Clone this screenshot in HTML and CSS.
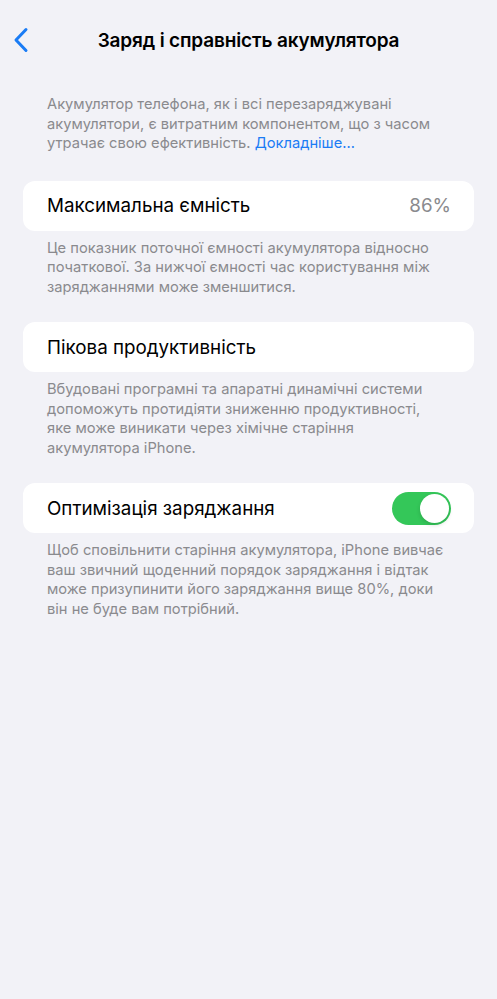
FILE: index.html
```html
<!DOCTYPE html>
<html lang="uk">
<head>
    <meta charset="UTF-8">
    <meta name="viewport" content="width=device-width, initial-scale=1.0">
    <title>Заряд і справність акумулятора</title>
    <link rel="stylesheet" href="styles.css">
</head>
<body>
    <header class="navbar">
        <a class="back" href="#">
            <svg width="16" height="26" viewBox="0 0 16 26">
                <path d="M13 2.5 L3 13 L13 23.5" fill="none" stroke="#1a7cf5" stroke-width="3" stroke-linecap="round" stroke-linejoin="round"/>
            </svg>
        </a>
        <h1>Заряд і справність акумулятора</h1>
    </header>

    <main class="content">
        <p class="note intro">
            Акумулятор телефона, як і всі перезаряджувані<br>
            акумулятори, є витратним компонентом, що з часом<br>
            утрачає свою ефективність. <a href="#">Докладніше…</a>
        </p>

        <div class="cell">
            <span class="label">Максимальна ємність</span>
            <span class="value">86%</span>
        </div>
        <p class="note">
            Це показник поточної ємності акумулятора відносно<br>
            початкової. За нижчої ємності час користування між<br>
            заряджаннями може зменшитися.
        </p>

        <div class="cell">
            <span class="label">Пікова продуктивність</span>
        </div>
        <p class="note">
            Вбудовані програмні та апаратні динамічні системи<br>
            допоможуть протидіяти зниженню продуктивності,<br>
            яке може виникати через хімічне старіння<br>
            акумулятора iPhone.
        </p>

        <div class="cell">
            <span class="label">Оптимізація заряджання</span>
            <span class="switch on"><span class="knob"></span></span>
        </div>
        <p class="note">
            Щоб сповільнити старіння акумулятора, iPhone вивчає<br>
            ваш звичний щоденний порядок заряджання і відтак<br>
            може призупинити його заряджання вище 80%, доки<br>
            він не буде вам потрібний.
        </p>
    </main>
</body>
</html>
```

FILE: styles.css
```css
body {
    margin: 0;
    padding: 0;
    background-color: #f2f2f7;
    font-family: Inter, Roboto, "Noto Sans", sans-serif;
    color: #000;
    min-height: 100vh;
}

/* top navigation bar */
.navbar {
    position: relative;
    height: 80px;
    display: flex;
    align-items: center;
    justify-content: center;
}

.navbar h1 {
    margin: 0;
    font-size: 19px;
    font-weight: 600;
    letter-spacing: -0.15px;
}

.back {
    position: absolute;
    left: 13px;
    top: 27px;
    display: block;
    line-height: 0;
}

.content {
    padding: 15px 23px 40px;
}

/* grey explanatory text */
.note {
    margin: 0 0 25px;
    padding: 8px 24px 0;
    font-size: 14.7px;
    line-height: 19.5px;
    color: #8a8a8e;
    white-space: nowrap;
}

.note.intro {
    margin-bottom: 27px;
    padding-top: 0;
}

.note a {
    color: #1a7cf5;
    text-decoration: none;
}

/* white rounded rows */
.cell {
    background-color: #fff;
    border-radius: 12px;
    height: 50px;
    padding: 0 23px 0 24px;
    display: flex;
    align-items: center;
    justify-content: space-between;
}

.label {
    font-size: 18.8px;
}

.value {
    font-size: 18.8px;
    color: #8a8a8e;
}

/* toggle switch */
.switch {
    width: 59px;
    height: 33px;
    border-radius: 17px;
    background-color: #34c759;
    position: relative;
}

.switch .knob {
    position: absolute;
    top: 2px;
    right: 2px;
    width: 29px;
    height: 29px;
    border-radius: 50%;
    background-color: #fff;
    box-shadow: 0 2px 4px rgba(0, 0, 0, 0.15);
}
```
